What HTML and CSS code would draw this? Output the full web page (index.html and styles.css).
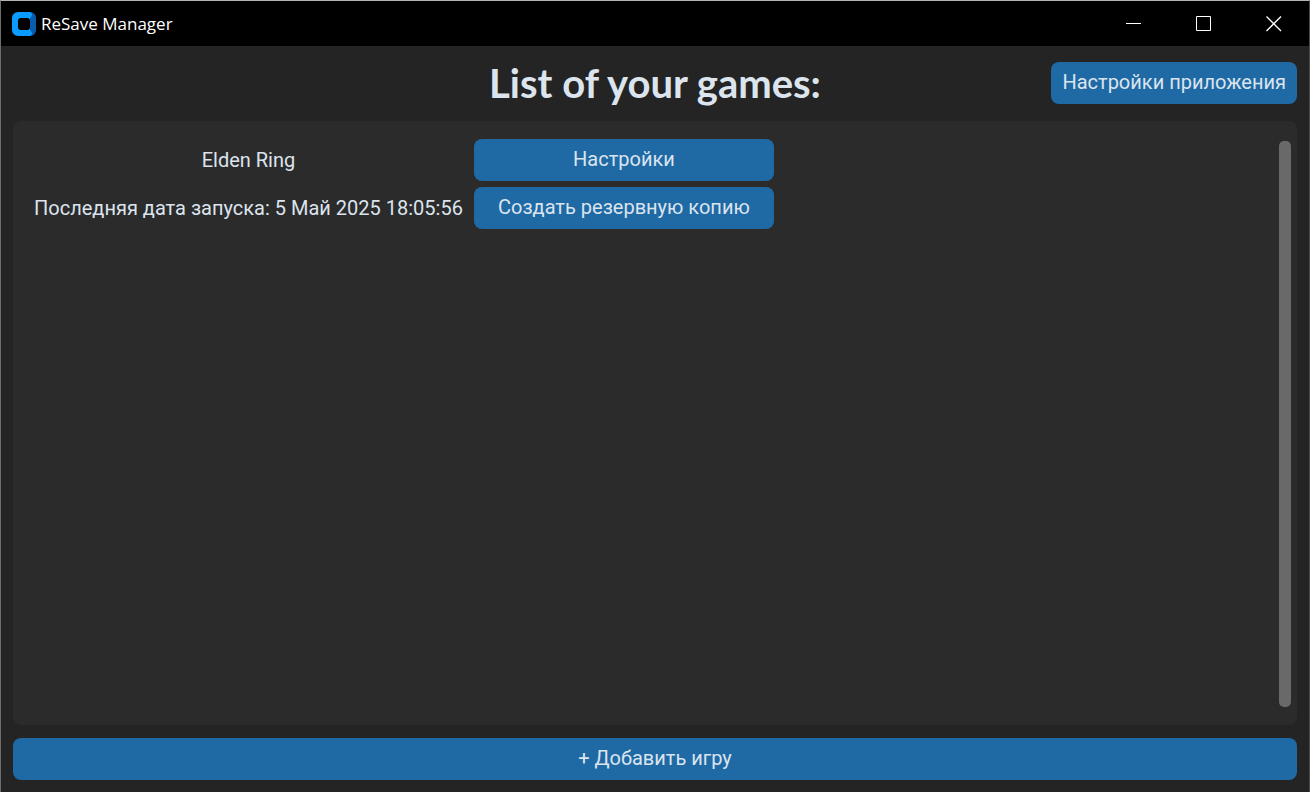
FILE: index.html
```html
<!DOCTYPE html>
<html lang="ru">
<head>
<meta charset="utf-8">
<title>ReSave Manager</title>
<link rel="stylesheet" href="styles.css">
</head>
<body>
<div class="window">
  <header class="titlebar">
    <svg class="logo" viewBox="0 0 24 24" aria-hidden="true">
      <path fill="#0a5cad" d="M17 0h1a6 6 0 0 1 6 6v12a6 6 0 0 1-6 6h-1z"/>
      <path fill="#0a9bff" d="M6 0h11.500a2.500 2.500 0 0 1 2.500 3q-.3 1.500-2 3v12q1.700 1.500 2 3a2.500 2.500 0 0 1-2.500 3H6a6 6 0 0 1-6-6V6a6 6 0 0 1 6-6z"/>
      <rect x="6" y="6" width="12" height="12" rx="3" fill="#000"/>
    </svg>
    <span class="app-name">ReSave Manager</span>
    <div class="controls">
      <button class="control" type="button" aria-label="Minimize"><svg class="glyph" viewBox="0 0 16 16"><path d="M0 7.500h15"/></svg></button>
      <button class="control" type="button" aria-label="Maximize"><svg class="glyph" viewBox="0 0 16 16"><path d="M.5.5h14v14H.5z"/></svg></button>
      <button class="control" type="button" aria-label="Close"><svg class="glyph" viewBox="0 0 16 16"><path stroke-width="1.300" d="M.5.5l14.500 14.500M15 .5L.5 15"/></svg></button>
    </div>
  </header>
  <main class="content">
    <div class="heading">
      <h1 class="title">List of your games:</h1>
      <button class="button app-settings" type="button">Настройки приложения</button>
    </div>
    <section class="panel">
      <div class="games">
        <span class="label">Elden Ring</span>
        <button class="button" type="button">Настройки</button>
        <span class="label">Последняя дата запуска: 5 Май 2025 18:05:56</span>
        <button class="button" type="button">Создать резервную копию</button>
      </div>
      <div class="scrollbar"></div>
    </section>
    <button class="button" type="button">+ Добавить игру</button>
  </main>
</div>
</body>
</html>
```

FILE: styles.css
```css
* {
  box-sizing: border-box;
}

body {
  margin: 0;
  background: #242424;
  color: #dce4ee;
  font-family: Roboto, "Noto Sans", sans-serif;
  font-size: 20px;
}

.window {
  display: flex;
  flex-direction: column;
  min-height: 100vh;
  border: 1px solid #4a4a4a;
  border-top-color: #b4b4b4;
  border-left-color: #6e6e6e;
  border-bottom: 0;
}

.titlebar {
  display: flex;
  align-items: center;
  height: 45px;
  padding-left: 11px;
  background: #000;
  color: #fff;
}

.logo {
  width: 24px;
  height: 24px;
}

.app-name {
  margin-left: 5px;
  font-family: "Open Sans", "Noto Sans", sans-serif;
  font-size: 17px;
}

.controls {
  display: flex;
  align-self: stretch;
  margin-left: auto;
}

.control {
  display: flex;
  align-items: center;
  justify-content: center;
  width: 70px;
  padding: 0;
  border: 0;
  background: none;
}

.glyph {
  width: 16px;
  height: 16px;
  fill: none;
  stroke: #fff;
}

.content {
  display: flex;
  flex: 1;
  flex-direction: column;
  padding: 16px 12px 12px;
}

.heading {
  display: grid;
  grid-template-columns: 1fr auto 1fr;
  align-items: center;
}

.title {
  grid-column: 2;
  margin: 0;
  font-family: Lato, sans-serif;
  font-size: 40px;
  font-weight: 700;
  line-height: 42px;
}

.button {
  height: 42px;
  padding: 0 10px 2px;
  border: 0;
  border-radius: 8px;
  background: #1f6aa5;
  color: #dce4ee;
  font: inherit;
}

.app-settings {
  justify-self: end;
  padding: 0 11px 2px;
}

.panel {
  display: flex;
  flex: 1;
  justify-content: space-between;
  margin: 17px 0 13px;
  padding: 18px 6px 18px 21px;
  border-radius: 8px;
  background: #2b2b2b;
}

.games {
  display: grid;
  grid-template-columns: auto 300px;
  align-content: start;
  align-items: center;
  gap: 6px 11px;
}

.label {
  text-align: center;
}

.scrollbar {
  width: 12px;
  margin-top: 2px;
  border-radius: 5px;
  background: #696969;
}
```
